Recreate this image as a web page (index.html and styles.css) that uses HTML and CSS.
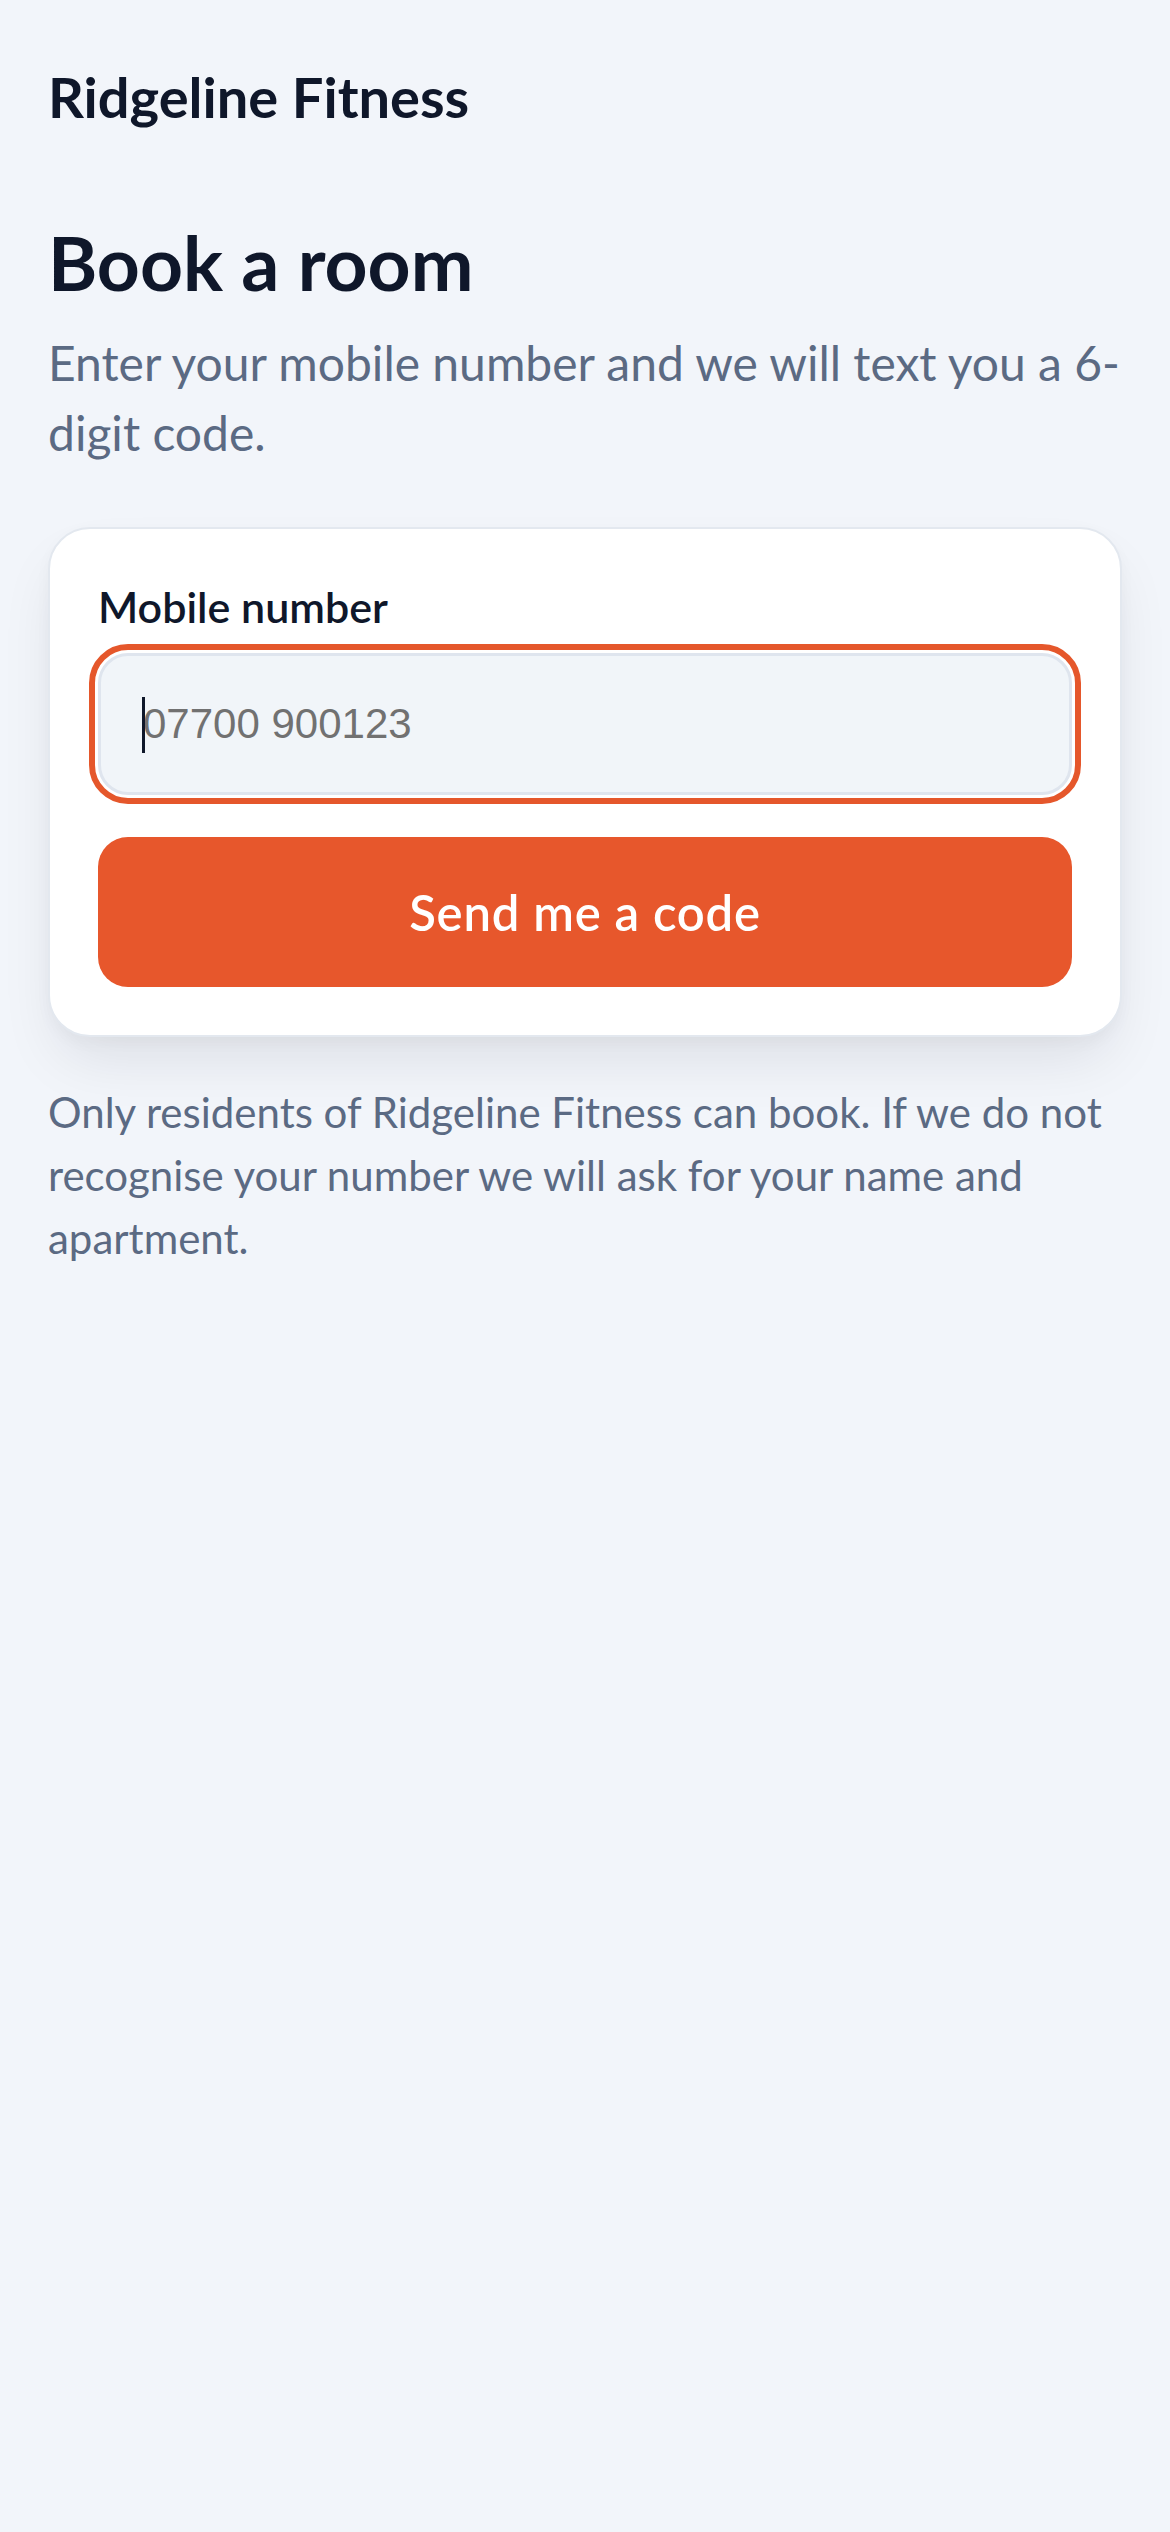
FILE: index.html
```html
<!DOCTYPE html>
<html lang="en">
<head>
<meta charset="utf-8">
<title>Ridgeline Fitness – Book a room</title>
<link rel="stylesheet" href="styles.css">
</head>
<body>
<main class="page">
  <header class="brand">Ridgeline Fitness</header>
  <h1 class="title">Book a room</h1>
  <p class="subtitle">Enter your mobile number and we will text you a 6-digit code.</p>
  <form class="card" onsubmit="return false">
    <label class="label" for="phone">Mobile number</label>
    <div class="field">
      <input id="phone" class="input" type="tel" placeholder="07700 900123">
      <span class="caret"></span>
    </div>
    <button class="button" type="submit">Send me a code</button>
  </form>
  <p class="note">Only residents of Ridgeline Fitness can book. If we do not recognise your number we will ask for your name and apartment.</p>
</main>
</body>
</html>
```
FILE: styles.css
```css
* { box-sizing: border-box; }
html, body {
  margin: 0;
  background: #f2f5fa;
}
body {
  font-family: Lato, "Open Sans", sans-serif;
  color: #0f172a;
}
.page {
  padding: 63px 48px 0;
  display: flex;
  flex-direction: column;
}
.brand {
  font-size: 56px;
  font-weight: 700;
  line-height: 1.2;
}
.title {
  margin: 87px 0 0;
  font-size: 75px;
  font-weight: 700;
  line-height: 1.2;
}
.subtitle {
  margin: 21px 0 0;
  font-size: 48px;
  line-height: 70px;
  color: #5b6a83;
}
.card {
  margin-top: 59px;
  background: #ffffff;
  border: 2px solid #e3e8ef;
  border-radius: 42px;
  padding: 52px 48px 48px;
  display: flex;
  flex-direction: column;
  box-shadow: 0 30px 60px -12px rgba(15, 23, 42, 0.10), 0 6px 16px rgba(15, 23, 42, 0.03);
}
.label {
  font-size: 43px;
  font-weight: 600;
  line-height: 1.2;
  color: #0f172a;
}
.field {
  position: relative;
  margin-top: 20px;
}
.input {
  display: block;
  width: 100%;
  height: 142px;
  margin: 0;
  padding: 0 40px 0 42px;
  border: 3px solid #dfe5ee;
  border-radius: 30px;
  background: #f1f5f9;
  font-family: "Liberation Sans", Arial, sans-serif;
  font-size: 42px;
  color: #0f172a;
  outline: 6px solid #e5572b;
  outline-offset: 3px;
}
.input::placeholder {
  color: #717171;
  opacity: 1;
}
.caret {
  position: absolute;
  left: 44px;
  top: 44px;
  width: 3px;
  height: 56px;
  background: #0f172a;
}
.button {
  margin-top: 42px;
  height: 150px;
  border: 0;
  border-radius: 30px;
  background: #e7572c;
  color: #ffffff;
  font-family: Lato, "Open Sans", sans-serif;
  font-size: 49px;
  font-weight: 600;
  letter-spacing: 0.8px;
}
.note {
  margin: 44px 0 0;
  font-size: 42px;
  line-height: 63px;
  color: #5b6a83;
}
```
